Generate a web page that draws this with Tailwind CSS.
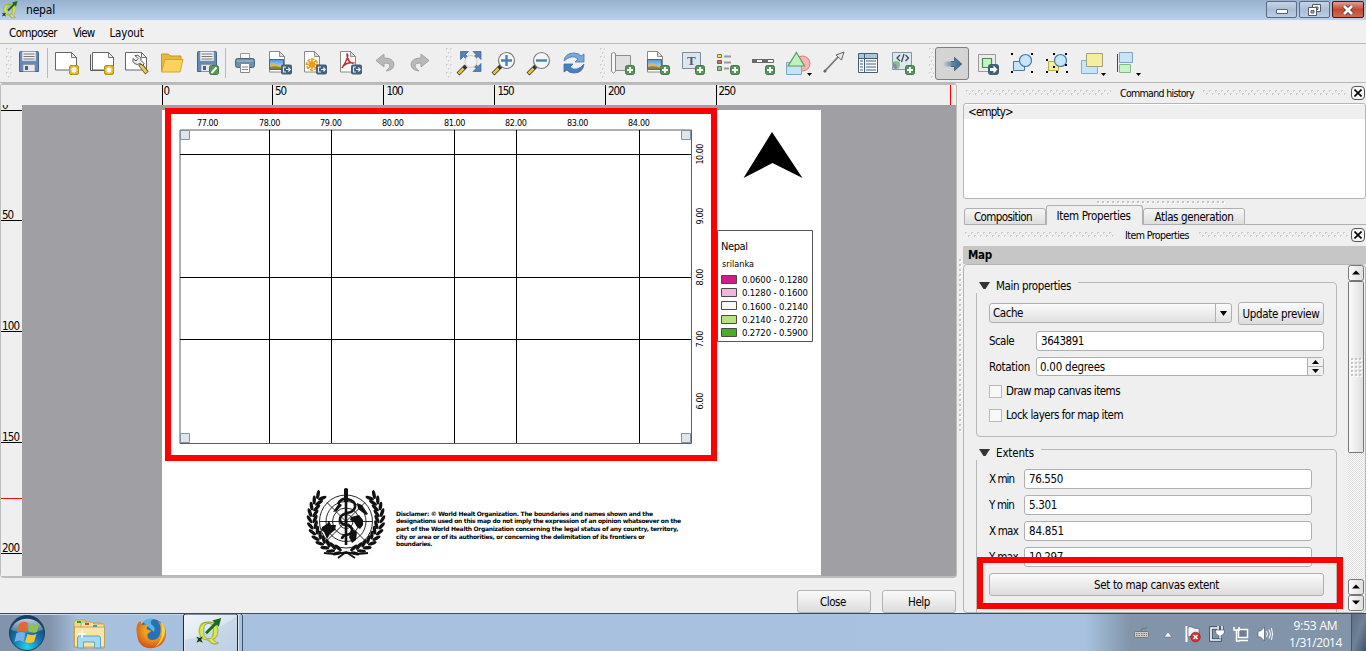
<!DOCTYPE html>
<html lang="en">
<head>
<meta charset="utf-8">
<title>nepal</title>
<script src="https://cdn.jsdelivr.net/npm/@tailwindcss/browser@4"></script>
</head>
<body class="w-[1366px] h-[651px] overflow-hidden bg-[#efefef] text-black text-[11.5px] leading-[14px] font-['DejaVu_Sans_Condensed','Noto_Sans',sans-serif] whitespace-nowrap">
<svg class="absolute w-0 h-0">
  <defs>
    <pattern id="gv" width="4" height="8" patternUnits="userSpaceOnUse"><path d="M0 0h2v2h-2zM2 4h2v2h-2z" fill="#d2d2d2"/><path d="M1 1h1v1h-1zM3 5h1v1h-1z" fill="#fff"/></pattern>
    <pattern id="gh" width="6" height="6" patternUnits="userSpaceOnUse"><path d="M0 0h2v2h-2zM3 3h2v2h-2z" fill="#cecece"/><path d="M1 1h1v1h-1zM4 4h1v1h-1z" fill="#fff"/></pattern>
    <pattern id="gd" width="5" height="5" patternUnits="userSpaceOnUse"><path d="M1 1h2v2h-2z" fill="#fff"/><path d="M0 0h2v2h-2z" fill="#c4c4c4"/></pattern>
    <pattern id="g4" width="4" height="4" patternUnits="userSpaceOnUse"><path d="M1 1h2v2h-2z" fill="#fff"/><path d="M0 0h2v2h-2z" fill="#c4c4c4"/></pattern>
    <pattern id="chk" width="2" height="2" patternUnits="userSpaceOnUse"><rect width="2" height="2" fill="#fafafa"/><path d="M0 0h1v1h-1zM1 1h1v1h-1z" fill="#dedede"/></pattern>
    <linearGradient id="thumb"><stop stop-color="#fcfcfc"/><stop offset="1" stop-color="#dedede"/></linearGradient>
    <linearGradient id="sky" x2="0" y2="1"><stop stop-color="#4b9be0"/><stop offset="1" stop-color="#cbe6f8"/></linearGradient>
    <linearGradient id="arr"><stop stop-color="#5d86a6" stop-opacity="0"/><stop offset=".5" stop-color="#5d86a6"/><stop offset="1" stop-color="#44647e"/></linearGradient>
    <g id="disk"><path d="M.5 1.500a1 1 0 0 1 1-1h17a1 1 0 0 1 1 1v19h-19z" fill="#6189b9" stroke="#44648c"/><path d="M3 .5h14v9.500h-14z" fill="#f2f2f2" stroke="#8c98a8" stroke-width=".6"/><path d="M4.500 3h11M4.500 5.500h11M4.500 8h11" stroke="#777"/><path d="M4 13.500h12v7h-12z" fill="#e8e8e8" stroke="#7b8796" stroke-width=".6"/><path d="M6 15h3v4h-3z" fill="#3d638e"/></g>
    <g id="plus"><rect x=".5" y=".5" width="9" height="9" rx="2" fill="#5a935c" stroke="#3f7a43"/><path d="M5 2v6M2 5h6" stroke="#fff" stroke-width="2"/></g>
    <g id="exp"><rect width="11" height="10" rx="2" fill="#43617c"/><path d="M5 2.500h-2.500v5h2.500M5 5h4M7.300 3l2 2-2 2" fill="none" stroke="#e8eef3" stroke-width="1.100"/></g>
    <g id="star"><rect x=".5" y=".5" width="9" height="9" rx="1.500" fill="#d9b321" stroke="#b8940f"/><path d="M5 1.500v7M1.500 5h7M2.600 2.600l4.800 4.800M7.400 2.600l-4.800 4.800" stroke="#fff" stroke-width="1.200"/></g>
    <g id="doc"><path d="M.5 .5h10l5 5v15.500h-15z" fill="#fff" stroke="#8a8a8a"/><path d="M10.500 .5v5h5z" fill="#ddd" stroke="#777" stroke-width=".8"/></g>
    <g id="pic"><path d="M.5 .5h14v10h-14z" fill="url(#sky)" stroke="#56646e"/><path d="M1 6q3-3 6-1t7 2v3h-13z" fill="#dcb85a"/><path d="M1 8q5-2 13 1v1h-13z" fill="#8d7c48"/></g>
    <g id="wide"><path d="M.5 .5h16l5 5v12.500h-21z" fill="#fff" stroke="#666"/><path d="M16.500 .5v5h5z" fill="#eee" stroke="#555" stroke-width=".8"/></g>
    <g id="hnd"><path d="M1 13l8-8" stroke="#333" stroke-width="4"/><path d="M1.500 12.500l5-5" stroke="#eac23e" stroke-width="2.600"/></g>
    <path id="dn" d="M0 0h5l-2.500 3z"/>
    <g id="q"><text x="0" y="14" font-family="Liberation Serif" font-weight="bold" font-size="17" fill="#dbe84e" stroke="#93a52e" stroke-width=".5">Q</text><path d="M5 9.500l7-7" stroke="#176b1a" stroke-width="1.800"/><path d="M9 1.500l5.500-1.500-1.500 5.500z" fill="#176b1a"/><path d="M-1 11.500l2 1 2-1-1 2 1 2-2-1-2 1 1-2z" fill="#123f14"/></g>
  </defs>
</svg>

<div class="flex flex-col w-[1366px] h-[651px]">
  <!-- title bar -->
  <header class="h-[21px] shrink-0 flex items-start bg-linear-to-b from-[#97b1cf] to-[#b8d0ea] border-b border-[#e6eef7]">
    <svg class="w-5 h-[20px]" viewBox="0 0 20 20"><use href="#q" transform="translate(3,1)"/></svg>
    <span class="ml-1.5 mt-[3px] text-[12px]" data-w="29">nepal</span>
    <div class="ml-auto mr-[2px] flex gap-[2px] pt-px">
      <div class="w-[31px] h-[17px] rounded-[2px] border border-[#5b6c80] bg-linear-to-b from-[#c6d5e6] via-[#a9bed6] to-[#b9cee5] flex items-center justify-center"><span class="w-3 h-[5px] mt-1 rounded-[1px] bg-white border border-[#5a6470]"></span></div>
      <div class="w-[31px] h-[17px] rounded-[2px] border border-[#5b6c80] bg-linear-to-b from-[#c6d5e6] via-[#a9bed6] to-[#b9cee5] flex items-center justify-center"><svg class="w-[13px] h-3" viewBox="0 0 13 12"><g fill="#fff" stroke="#535d68"><path d="M4.500 .5h8v7h-8z"/><path d="M7 3h3v2.500h-3z" fill="#9fb6cf"/><path d="M.5 3.500h8v8h-8z"/><path d="M3 6.500h3v2.500h-3z" fill="#9fb6cf"/></g></svg></div>
      <div class="w-[32px] h-[17px] rounded-[2px] border border-[#4c1512] bg-linear-to-b from-[#e39d8c] via-[#c04a33] to-[#cf6b50] flex items-center justify-center"><svg class="w-3 h-[10px]" viewBox="0 0 12 10"><path d="M2 1l8 8M10 1l-8 8" stroke="#5a4448" stroke-width="4.500"/><path d="M2 1l8 8M10 1l-8 8" stroke="#fff" stroke-width="2.600"/></svg></div>
    </div>
  </header>
  <!-- menu bar -->
  <nav class="h-[23px] shrink-0 flex items-center pl-[9px] pt-0.5 gap-4 border-b border-[#b9b9b9] bg-[#f0f0f0]">
    <span data-w="48">Composer</span><span data-w="21.5">View</span><span class="-ml-px" data-w="34">Layout</span>
  </nav>
  <!-- tool bars -->
  <div class="h-[39px] shrink-0 flex border-b border-[#b5b5b5]">
    <svg class="w-[50px] h-[38px]" viewBox="0 44 50 38"><rect x="0" y="0" width="6" height="30" fill="url(#gv)" transform="translate(6,48)"/><use href="#disk" x="19" y="51"/><path d="M47.500 48v30" stroke="#b8b8b8"/></svg>
    <svg class="w-[35px] h-[38px]" viewBox="50 44 35 38"><use href="#wide" x="55" y="52"/><use href="#star" x="69" y="65"/></svg>
    <svg class="w-[35px] h-[38px]" viewBox="85 44 35 38"><path d="M90.500 54.500v16h19" fill="none" stroke="#555"/><use href="#wide" x="92" y="52"/><use href="#star" x="104" y="65"/></svg>
    <svg class="w-[35px] h-[38px]" viewBox="120 44 35 38"><use href="#wide" x="125" y="52"/><path d="M140 64l7 9" stroke="#7b6329" stroke-width="4.500"/><path d="M140.500 65l6 7.500" stroke="#ecca64" stroke-width="2.800"/><path d="M133 58.500a4.500 4.500 0 0 0 7 5l3 2 1-2-3-3a4.500 4.500 0 0 0-6-5l3 3-2 2.500z" fill="#ececec" stroke="#444" stroke-width=".9"/></svg>
    <svg class="w-[35px] h-[38px]" viewBox="155 44 35 38"><path d="M161.500 71v-17h7l1.500 2h11v4" fill="#e8b93d" stroke="#c19528"/><path d="M161.500 72l3.500-12.500h18l-3 12.500z" fill="#fbd35c" stroke="#d2a533"/></svg>
    <svg class="w-[38px] h-[38px]" viewBox="190 44 38 38"><use href="#disk" x="197" y="51"/><use href="#plus" x="209" y="65"/><path d="M210.500 66.500h7v7h-7z" fill="#5a935c"/><path d="M211.500 73l5-5.500" stroke="#fff" stroke-width="2"/><path d="M225.500 48v30" stroke="#b8b8b8"/></svg>
    <svg class="w-[35px] h-[38px]" viewBox="228 44 35 38"><path d="M240.500 53.500h9v6h-9z" fill="#fff" stroke="#999"/><rect x="235.500" y="58.500" width="19" height="9" rx="2" fill="#6e90a9" stroke="#49677e"/><path d="M237 61h16" stroke="#a9c2d3"/><path d="M240.500 63.500h9v9h-9z" fill="#fff" stroke="#888"/><path d="M242 67h6M242 69.500h6" stroke="#888"/></svg>
    <svg class="w-[35px] h-[38px]" viewBox="263 44 35 38"><use href="#doc" x="269" y="51"/><use href="#pic" x="269" y="59"/><use href="#exp" x="281" y="64.500"/></svg>
    <svg class="w-[35px] h-[38px]" viewBox="298 44 35 38"><use href="#doc" x="304" y="51"/><g fill="none" stroke="#ef9a22" stroke-width="1.600"><path d="M312 58v13M305.500 64.500h13M307.500 60l9 9M316.500 60l-9 9"/><circle cx="312" cy="64.500" r="2.500"/><circle cx="312" cy="64.500" r="5.500" stroke-dasharray="2 2.320"/></g><use href="#exp" x="316" y="64.500"/></svg>
    <svg class="w-[35px] h-[38px]" viewBox="333 44 35 38"><use href="#doc" x="340" y="51"/><path d="M347 54c2 0 0 7-5 14 1-3 6-6 11-5-3 1-6-4-6-9z" fill="none" stroke="#c8252b" stroke-width="1.500"/><use href="#exp" x="351" y="64.500"/></svg>
    <svg class="w-[35px] h-[38px]" viewBox="368 44 35 38"><path d="M376 60.500l8-6.500v4q9 0 10 6 0 6-8 7 4-3 4-5 0-3-6-3v4z" fill="#b9b9b9" stroke="#a2a2a2"/></svg>
    <svg class="w-[35px] h-[38px]" viewBox="403 44 35 38"><path d="M429 60.500l-8-6.500v4q-9 0-10 6 0 6 8 7-4-3-4-5 0-3 6-3v4z" fill="#b9b9b9" stroke="#a2a2a2"/></svg>
    <svg class="w-[14px] h-[38px]" viewBox="438 44 14 38"><rect width="6" height="30" fill="url(#gv)" transform="translate(446,48)"/></svg>
    <svg class="w-[35px] h-[38px]" viewBox="452 44 35 38"><path d="M460.500 51.500h8l-3 3 4 4-2 2-4-4-3 3zM481 51.500h-8l3 3-4 4 2 2 4-4 3 3zM481 71.500h-8l3-3-4-4 2-2 4 4 3-3z" fill="#5780b4" stroke="#3c6294" stroke-width=".7"/><circle cx="471" cy="61.500" r="6" fill="#f2f2f2" stroke="#ccc"/><use href="#hnd" x="457" y="61"/></svg>
    <svg class="w-[35px] h-[38px]" viewBox="487 44 35 38"><use href="#hnd" x="492" y="61"/><circle cx="506.500" cy="60.500" r="8" fill="#f3f5f7" stroke="#7d7d7d" stroke-width="1.200"/><path d="M506.500 55v11M501 60.500h11" stroke="#4f7fb7" stroke-width="2.400"/></svg>
    <svg class="w-[35px] h-[38px]" viewBox="522 44 35 38"><use href="#hnd" x="527" y="61"/><circle cx="541.500" cy="60.500" r="8" fill="#f3f5f7" stroke="#7d7d7d" stroke-width="1.200"/><path d="M536 60.500h11" stroke="#4f7fb7" stroke-width="2.400"/></svg>
    <svg class="w-[35px] h-[38px]" viewBox="557 44 35 38"><path d="M564 61q1-8 10-8 5 0 7 3l3-2v8h-9l3-3q-3-3-7-2-4 1-7 4z" fill="#7ba7d9" stroke="#4778b2" stroke-width=".8"/><path d="M584 64q-1 9-10 9-5 0-7-3l-3 2v-8h9l-3 3q3 3 7 2 4-1 7-5z" fill="#4a7dbd" stroke="#3c6ca8" stroke-width=".8"/></svg>
    <svg class="w-[13px] h-[38px]" viewBox="592 44 13 38"><rect width="6" height="30" fill="url(#gv)" transform="translate(600,48)"/></svg>
    <svg class="w-[35px] h-[38px]" viewBox="605 44 35 38"><path d="M614.500 55.500h16v15h-16z" fill="#e0e0e0" stroke="#8c8c8c"/><path d="M611.500 53.500q2-2 4 0v18q-2 3-4 0z" fill="#f6f6f6" stroke="#8a8a8a"/><use href="#plus" x="625" y="65"/></svg>
    <svg class="w-[35px] h-[38px]" viewBox="640 44 35 38"><use href="#doc" x="647" y="51"/><use href="#pic" x="647" y="59"/><use href="#plus" x="660" y="65"/></svg>
    <svg class="w-[35px] h-[38px]" viewBox="675 44 35 38"><path d="M682.500 52.500h18v16h-18z" fill="#dde6ef" stroke="#7e8d9b"/><text x="687" y="65" font-family="Liberation Serif" font-size="13" font-weight="bold" fill="#4e6071">T</text><use href="#plus" x="695" y="65"/></svg>
    <svg class="w-[35px] h-[38px]" viewBox="710 44 35 38"><path d="M717.500 54.500h4v3h-4z" fill="#efe34b" stroke="#7a7a50"/><path d="M717.500 60.500h4v3h-4z" fill="#e36a6a" stroke="#815050"/><path d="M717.500 66.500h4v4h-4z" fill="#8cc48c" stroke="#507a50"/><path d="M724 56.500h7M724 62.500h7M724 68.500h5" stroke="#9a9a9a" stroke-width="2"/><use href="#plus" x="730" y="65"/></svg>
    <svg class="w-[35px] h-[38px]" viewBox="745 44 35 38"><path d="M752.500 59.500h21v3h-21z" fill="#fff" stroke="#666"/><path d="M752 59h5v4h-5zM762 59h6v4h-6z" fill="#6a6a6a"/><use href="#plus" x="765" y="65"/></svg>
    <svg class="w-[35px] h-[38px]" viewBox="780 44 35 38"><circle cx="802.500" cy="63.500" r="7.500" fill="#f7b6b6" stroke="#df7676"/><path d="M786.500 62.500h15v12h-15z" fill="#c6e2f7" stroke="#7aa6c8"/><path d="M796.500 52.500l8 13.500h-16.500z" fill="#bff0bf" stroke="#5f9c60" stroke-width="1.200"/><use href="#dn" x="807" y="73"/></svg>
    <svg class="w-[35px] h-[38px]" viewBox="815 44 35 38"><path d="M824 72l15-16" stroke="#777" stroke-width="1.800"/><path d="M844 52l-2.500 8-5.500-5z" fill="#e6e6e6" stroke="#666"/><circle cx="825" cy="71" r="1.500" fill="#666"/></svg>
    <svg class="w-[35px] h-[38px]" viewBox="850 44 35 38"><path d="M858.500 53.500h19v19h-19z" fill="#fff" stroke="#3f6076"/><path d="M859 54h18v4h-18z" fill="#a9c8dd"/><path d="M858.500 58.500h19M864.500 54v18" stroke="#3f6076"/><path d="M860 61h3M860 64h3M860 67h3M860 70h3M866 61h10M866 64h10M866 67h10M866 70h10" stroke="#3f6076" stroke-width="1.200"/></svg>
    <svg class="w-[35px] h-[38px]" viewBox="885 44 35 38"><path d="M892.500 52.500h19v17h-19z" fill="#dde7ef" stroke="#8494a1"/><path d="M900 55l-3 3 3 3M905.500 55l3 3-3 3M904 54l-2.500 8" fill="none" stroke="#39424a" stroke-width="1.200"/><circle cx="896" cy="65" r="4" fill="#85c485"/><path d="M893 63l3 1 1 4-2 1-2-3z" fill="#8f7fc8"/><use href="#plus" x="905" y="65"/></svg>
    <svg class="w-[15px] h-[38px]" viewBox="920 44 15 38"><rect width="5" height="30" fill="url(#gv)" transform="translate(929,48)"/></svg>
    <div class="w-[34px] h-[33px] mt-[3px] mr-px rounded-[3px] border border-[#7d7d7d] bg-[#d4d4d4] flex items-center justify-center pl-0.5"><svg class="w-5 h-4" viewBox="0 0 20 16"><path d="M0 5.500h11.500v-4.500l7.500 7-7.500 7v-4.500h-11.500z" fill="url(#arr)"/><path d="M8 5.500h3.500v-4l7 6.500-7 6.500v-4h-3.500" fill="none" stroke="#47677f"/></svg></div>
    <svg class="w-[35px] h-[38px]" viewBox="970 44 35 38"><path d="M978.500 54.500h17v17h-17z" fill="#ececec" stroke="#999"/><path d="M982.500 58.500h9v9h-9z" fill="#bff5bf" stroke="#4e8a50" stroke-width="1.200"/><rect x="988" y="64" width="11" height="11" rx="3" fill="#3e5f76"/><path d="M990 68h3.500v-2.500l4 4-4 4v-2.500h-3.500z" fill="#fff"/></svg>
    <svg class="w-[35px] h-[38px]" viewBox="1005 44 35 38"><path d="M1013.500 61.500h11v9h-11z" fill="#c6e5fb" stroke="#4a7898"/><circle cx="1025.500" cy="60.500" r="6" fill="#c6e5fb" stroke="#4a7898" stroke-width="1.200"/><path d="M1011 53h2v2h-2zM1031 53h2v2h-2zM1011 71h2v2h-2zM1031 71h2v2h-2z"/></svg>
    <svg class="w-[35px] h-[38px]" viewBox="1040 44 35 38"><path d="M1048.500 61.500h10v9h-10z" fill="#f5ef95" stroke="#b9ae3f"/><circle cx="1060.500" cy="60.500" r="6" fill="#c6e5fb" stroke="#4a7898" stroke-width="1.200"/><path d="M1053 53h2v2h-2zM1065 53h2v2h-2zM1046 59h2v2h-2zM1046 71h2v2h-2zM1053 66h2v2h-2zM1056 71h2v2h-2zM1066 71h2v2h-2zM1065 64h2v2h-2z"/></svg>
    <svg class="w-[35px] h-[38px]" viewBox="1075 44 35 38"><path d="M1081.500 60.500h16v13h-16z" fill="#c6e5fb" stroke="#86a9c6"/><path d="M1086.500 53.500h16v13h-16z" fill="#f3ef9c" stroke="#a5a07c"/><use href="#dn" x="1101" y="73"/></svg>
    <svg class="w-[35px] h-[38px]" viewBox="1110 44 35 38"><path d="M1117.500 54v18" stroke="#444"/><path d="M1119.500 52.500h13v10h-13z" fill="#c6e5fb" stroke="#7fa3c0"/><path d="M1119.500 64.500h11v8h-11z" fill="#c4f7c4" stroke="#86b986"/><use href="#dn" x="1136" y="73"/></svg>
  </div>

  <main class="flex-1 min-h-0 flex">
    <!-- composition view -->
    <section class="w-[958px] shrink-0 flex flex-col">
      <div class="w-[957px] h-[495px] rounded-sm border-2 border-[#bcbcbc] border-l-[1px]">
        <svg class="w-[955px] h-[491px]" viewBox="1 85 955 491" font-family="DejaVu Sans Condensed">
          <rect x="0" y="84" width="956" height="22" fill="#efefef"/>
          <rect x="0" y="105" width="22" height="472" fill="#efefef"/>
          <rect x="22" y="105" width="935" height="472" fill="#a09fa4"/>
          <path d="M162.500 85v20M272.500 85v20M383.500 85v20M494.500 85v20M605.500 85v20M716.500 85v20M1 110.500h21M1 220.500h21M1 331.500h21M1 442.500h21M1 553.500h21" stroke="#000"/>
          <path d="M950.500 85v20M1 498.500h21" stroke="#f00"/>
          <g font-size="11.500">
            <text x="163.500" y="95" textLength="6">0</text><text x="275" y="95" textLength="12">50</text><text x="386.500" y="95" textLength="17">100</text><text x="497.500" y="95" textLength="17">150</text><text x="608" y="95" textLength="17.500">200</text><text x="718.500" y="95" textLength="17.500">250</text>
            <text x="2" y="109">0</text><text x="2" y="219" textLength="12">50</text><text x="2" y="330" textLength="18">100</text><text x="2" y="441" textLength="18">150</text><text x="2" y="552" textLength="18">200</text>
          </g>
          <rect x="1" y="95" width="10" height="10" fill="#efefef"/>
          <rect x="162" y="110" width="659" height="466" fill="#fff"/>
          <path d="M162 575.500h659" stroke="#b8b8ba"/>
          <!-- map frame and grid -->
          <path d="M180 130h511.500v313.500h-511.500z" fill="none" stroke="#5f5f5f" stroke-width="1"/>
          <path d="M269.500 130v313M331.500 130v313M454.500 130v313M516.500 130v313M639.500 130v313M180 154.500h511M180 277.500h511M180 339.500h511" stroke="#000"/>
          <g fill="#e3e3ea" stroke="#7e97a5"><path d="M180.500 130.500h9v9h-9zM681.500 130.500h9v9h-9zM180.500 433.500h9v9h-9zM681.500 433.500h9v9h-9z"/></g>
          <g font-size="9">
            <text x="197" y="126" textLength="21.500">77.00</text><text x="259" y="126" textLength="21.500">78.00</text><text x="320" y="126" textLength="22">79.00</text><text x="382" y="126" textLength="22">80.00</text><text x="444" y="126" textLength="21.500">81.00</text><text x="505" y="126" textLength="22">82.00</text><text x="567" y="126" textLength="21.500">83.00</text><text x="628" y="126" textLength="22">84.00</text>
            <text transform="translate(702.500,164.500) rotate(-90)" textLength="21">10.00</text><text transform="translate(702.500,224.500) rotate(-90)" textLength="17">9.00</text><text transform="translate(702.500,285.500) rotate(-90)" textLength="17">8.00</text><text transform="translate(702.500,347.500) rotate(-90)" textLength="17">7.00</text><text transform="translate(702.500,409.500) rotate(-90)" textLength="17">6.00</text>
          </g>
          <path d="M772 132l30.500 46-30-15-29 15z"/>
          <!-- legend -->
          <path d="M717.500 230.500h95v111h-95z" fill="#fff" stroke="#555"/>
          <text x="721" y="250" font-size="11" textLength="27">Nepal</text>
          <text x="722" y="267" font-size="9" textLength="32">srilanka</text>
          <g stroke="#4a4a4a"><path d="M721.500 275.500h15v8h-15z" fill="#d01c8b"/><path d="M721.500 288.500h15v8h-15z" fill="#f1b6da"/><path d="M721.500 301.500h15v8h-15z" fill="#f7f7f7"/><path d="M721.500 315.500h15v8h-15z" fill="#b8e186"/><path d="M721.500 328.500h15v8h-15z" fill="#4dac26"/></g>
          <g font-size="9.500"><text x="742" y="283" textLength="66">0.0600 - 0.1280</text><text x="742" y="296" textLength="66">0.1280 - 0.1600</text><text x="742" y="310" textLength="66">0.1600 - 0.2140</text><text x="742" y="323" textLength="66">0.2140 - 0.2720</text><text x="742" y="336" textLength="66">0.2720 - 0.5900</text></g>
          <!-- emblem -->
          <g fill="none" stroke="#111" stroke-width=".9">
            <circle cx="346" cy="521.500" r="26.500"/><circle cx="346" cy="521.500" r="20"/><circle cx="346" cy="521.500" r="13.500"/><circle cx="346" cy="521.500" r="7"/>
            <path d="M319.500 521.500h53M327 502.500l38 38M365 502.500l-38 38"/>
            <path d="M346 489v56" stroke-width="2.600"/>
            <path d="M338 504q3-6 9-5 9 2 8 8-1 5-8 6-7 2-7 6 0 5 6 6t6 5-6 5q-4 1-4 4" stroke-width="2.600"/>
            <path d="M324 553q12 2 22-1 10 3 22 1M338 558l8-6M355 558l-9-6" stroke-width="1.800"/>
          </g>
          <g fill="#111"><path d="M344 489q2-2 4 0v13h-4z"/><path d="M322 527l5-3 2-3 2 4 5 0-1 5-5 4-3 5-3-7-3-2zM351 517l8-2 4 5 0 5-3 4-3-2-3-5-4-2zM352 529l5 3-1 8-4 3-3-6zM357 503l5 2 6 9-2 1-8-6zM333 512l6-9 3 2-5 6z"/><g id="laurel"></g></g>
          <g font-size="6" font-weight="bold" font-family="DejaVu Sans"><text x="396" y="515.500" textLength="257">Disclamer: © World Healt Organization. The boundaries and names shown and the</text><text x="396" y="523" textLength="285">designations used on this map do not imply the expression of an opinion whatsoever on the</text><text x="396" y="530.500" textLength="282.500">part of the World Health Organization concerning the legal status of any country, territory,</text><text x="396" y="538.500" textLength="249">city or area or of its authorities, or concerning the delimitation of its frontiers or</text><text x="396" y="546" textLength="36.500">boundaries.</text></g>
          <rect x="168" y="111" width="546" height="347" fill="none" stroke="#f00" stroke-width="6"/>
        </svg>
      </div>
      <div class="flex justify-end gap-[11px] pt-3 pr-[2px]">
        <div class="w-[74px] h-[23px] rounded-[3px] border border-[#b3b3b3] bg-linear-to-b from-[#fafafa] to-[#dcdcdc] flex items-center justify-center pr-0.5"><span data-w="26">Close</span></div>
        <div class="w-[74px] h-[23px] rounded-[3px] border border-[#b3b3b3] bg-linear-to-b from-[#fafafa] to-[#dcdcdc] flex items-center justify-center"><span data-w="22">Help</span></div>
      </div>
    </section>

    <!-- dock panels -->
    <svg class="w-[5px] h-[529px] shrink-0" viewBox="958 83 5 529"><rect width="3" height="175" fill="url(#gd)" transform="translate(959,259)"/></svg>
    <aside class="w-[403px] flex flex-col">
      <div class="h-5 shrink-0 flex items-center text-[10.5px]">
        <svg class="w-[145px] h-[6px] ml-[3px] shrink-0"><rect width="145" height="6" fill="url(#gh)"/></svg>
        <span class="ml-[9px] shrink-0" data-w="74">Command history</span>
        <svg class="w-[144px] h-[6px] ml-[9px] shrink-0"><rect width="144" height="6" fill="url(#gh)"/></svg>
        <div class="ml-auto mr-px w-[14px] h-[14px] shrink-0 rounded-sm border border-[#555] bg-[#f6f6f6] flex items-center justify-center"><svg class="w-2 h-2" viewBox="0 0 8 8"><path d="M.5 .5l7 7M7.500 .5l-7 7" stroke="#000" stroke-width="1.600"/></svg></div>
      </div>
      <div class="h-[96px] shrink-0 rounded-[3px] border border-[#b5b5b5] bg-white"><div class="h-[14px] pl-1 mt-px bg-[#efefef] flex items-center"><span data-w="45">&lt;empty&gt;</span></div></div>
      <svg class="w-[128px] h-[3px] ml-[134px] mt-[2px] shrink-0"><rect width="128" height="3" fill="url(#gd)"/></svg>
      <div class="h-[21px] shrink-0 flex items-end">
        <div class="w-[82px] h-[17px] ml-px rounded-t-[3px] border border-[#b0b0b0] bg-linear-to-b from-[#f6f6f6] to-[#dedede] flex items-center justify-center pr-1 pt-px"><span data-w="58">Composition</span></div>
        <div class="w-[97px] h-[20px] rounded-t-[3px] border border-b-0 border-[#b0b0b0] flex items-center justify-center pr-0.5"><span data-w="74">Item Properties</span></div>
        <div class="w-[102px] h-[17px] rounded-t-[3px] border border-[#b0b0b0] bg-linear-to-b from-[#f6f6f6] to-[#dedede] flex items-center justify-center pt-px"><span data-w="79">Atlas generation</span></div>
        <div class="flex-1 h-px bg-[#b0b0b0]"></div>
      </div>
      <div class="h-[21px] shrink-0 flex items-center pb-0.5 text-[10.5px]">
        <svg class="w-[150px] h-[6px] ml-[2px] shrink-0"><rect width="150" height="6" fill="url(#gh)"/></svg>
        <span class="ml-[10px] shrink-0" data-w="64">Item Properties</span>
        <svg class="w-[149px] h-[6px] ml-[10px] shrink-0"><rect width="149" height="6" fill="url(#gh)"/></svg>
        <div class="ml-auto mr-px w-[14px] h-[14px] shrink-0 rounded-sm border border-[#555] bg-[#f6f6f6] flex items-center justify-center"><svg class="w-2 h-2" viewBox="0 0 8 8"><path d="M.5 .5l7 7M7.500 .5l-7 7" stroke="#000" stroke-width="1.600"/></svg></div>
      </div>
      <div class="h-[18px] shrink-0 bg-[#c6c6c6] flex items-center pl-[5px] font-bold"><span data-w="24">Map</span></div>
      <div class="flex-1 min-h-0 flex rounded-sm border border-[#b5b5b5] relative">
        <div class="flex-1 pl-3 pr-[11px] overflow-hidden">
          <!-- main properties -->
          <div class="h-[155px] mt-[17px] border border-[#b8b8b8] rounded-sm px-3">
            <div class="-ml-[13px] -mt-[5px] h-[15px] w-[102px] bg-[#efefef] flex items-center pl-[3px]"><svg class="w-[11px] h-[7px] shrink-0" viewBox="0 0 11 7"><path d="M0 0h11l-4.500 7h-2z" fill="#333"/></svg><span class="ml-[6px]" data-w="75">Main properties</span></div>
            <div class="flex mt-[9px] justify-between">
              <div class="w-[243px] h-5 mt-px rounded-[3px] border border-[#b0b0b0] bg-linear-to-b from-[#fbfbfb] to-[#e0e0e0] flex items-center pl-[3px]"><span data-w="30">Cache</span><div class="ml-auto w-[16px] h-full border-l border-[#b0b0b0] flex items-center justify-center"><svg class="w-[7px] h-[5px]" viewBox="0 0 7 5"><path d="M0 0h7l-3.500 5z"/></svg></div></div>
              <div class="w-[86px] h-[23px] rounded-[3px] border border-[#b0b0b0] bg-linear-to-b from-[#fbfbfb] to-[#dcdcdc] flex items-center justify-center"><span data-w="77">Update preview</span></div>
            </div>
            <div class="flex items-center justify-between mt-[6px] h-5"><span data-w="25">Scale</span><div class="w-[288px] h-5 rounded-[3px] border border-[#b0b0b0] bg-white flex items-center pl-1"><span data-w="43">3643891</span></div></div>
            <div class="flex items-center justify-between mt-[6px] h-[19px]"><span data-w="41">Rotation</span><div class="w-[288px] h-[19px] rounded-[3px] border border-[#b0b0b0] bg-white flex items-center pl-[3px]"><span data-w="65">0.00 degrees</span>
              <div class="ml-auto w-4 h-full border-l border-[#b0b0b0] bg-[#f0f0f0] flex flex-col"><div class="h-[9px] border-b border-[#b0b0b0] flex items-center justify-center"><svg class="w-[7px] h-1" viewBox="0 0 7 4"><path d="M0 4h7l-3.500-4z"/></svg></div><div class="h-2 flex items-center justify-center"><svg class="w-[7px] h-1" viewBox="0 0 7 4"><path d="M0 0h7l-3.500 4z"/></svg></div></div></div></div>
            <div class="flex items-center mt-[8px] h-[14px]"><span class="w-[13px] h-[13px] border border-[#b8b8b8] bg-[#f8f8f8]"></span><span class="ml-1" data-w="114">Draw map canvas items</span></div>
            <div class="flex items-center mt-[10px] h-[14px]"><span class="w-[13px] h-[13px] border border-[#b8b8b8] bg-[#f8f8f8]"></span><span class="ml-1" data-w="117">Lock layers for map item</span></div>
          </div>
          <!-- extents -->
          <div class="h-[180px] mt-3 border border-[#b8b8b8] rounded-sm px-3">
            <div class="-ml-[13px] -mt-[5px] h-[15px] w-[65px] bg-[#efefef] flex items-center pl-[3px]"><svg class="w-[11px] h-[7px] shrink-0" viewBox="0 0 11 7"><path d="M0 0h11l-4.500 7h-2z" fill="#333"/></svg><span class="ml-[6px]" data-w="38">Extents</span></div>
            <div class="mt-[9px] flex flex-col gap-[6px] pr-3">
              <div class="flex items-center justify-between h-5"><span data-w="25">X min</span><div class="w-[288px] h-5 rounded-[3px] border border-[#b0b0b0] bg-white flex items-center pl-1"><span data-w="34">76.550</span></div></div>
              <div class="flex items-center justify-between h-5"><span data-w="25">Y min</span><div class="w-[288px] h-5 rounded-[3px] border border-[#b0b0b0] bg-white flex items-center pl-1"><span data-w="28">5.301</span></div></div>
              <div class="flex items-center justify-between h-5"><span data-w="29">X max</span><div class="w-[288px] h-5 rounded-[3px] border border-[#b0b0b0] bg-white flex items-center pl-1"><span data-w="35">84.851</span></div></div>
              <div class="flex items-center justify-between h-5"><span data-w="29">Y max</span><div class="w-[288px] h-5 rounded-[3px] border border-[#b0b0b0] bg-white flex items-center pl-1"><span data-w="34">10.297</span></div></div>
            </div>
            <div class="h-[23px] mt-[6px] rounded-[3px] border border-[#b0b0b0] bg-linear-to-b from-[#fbfbfb] to-[#dcdcdc] flex items-center justify-center"><span data-w="125">Set to map canvas extent</span></div>
          </div>
        </div>
        <svg class="w-4 h-[347px] mr-px shrink-0" viewBox="1348 265 16 347"><rect x="1348" y="453" width="16" height="130" fill="url(#chk)"/><g fill="url(#thumb)" stroke="#777"><rect x="1348.500" y="265.500" width="15" height="15" rx="2"/><rect x="1348.500" y="281.500" width="15" height="171" rx="1"/><rect x="1348.500" y="579.500" width="15" height="15" rx="2"/><rect x="1348.500" y="595.500" width="15" height="15" rx="2"/></g><path d="M1352 274.500h8l-4-4zM1352 588.500h8l-4-4zM1352 600.500h8l-4 4z"/><rect width="11" height="19" fill="url(#g4)" transform="translate(1351,358)"/></svg>
        <div class="absolute left-[13px] top-[292px] w-[366px] h-[52px] border-6 border-[#f00]"></div>
      </div>
    </aside>
  </main>

  <!-- taskbar -->
  <footer class="h-[38px] shrink-0 flex border-t border-[#3c4c5e] bg-[linear-gradient(90deg,#8194ab_0,#8194ab_50px,#a6c0dd_78px,#a8c2df_1085px,#8194aa_1130px,#8194aa_1366px)]">
    <svg class="w-[245px] h-[37px]" viewBox="0 614 245 37">
      <defs><radialGradient id="orb" cx=".5" cy=".9" r=".8"><stop stop-color="#1fd5f5"/><stop offset=".5" stop-color="#1674ae"/><stop offset="1" stop-color="#183f67"/></radialGradient><linearGradient id="gl" x2="0" y2="1"><stop stop-color="#fff" stop-opacity=".75"/><stop offset="1" stop-color="#fff" stop-opacity=".15"/></linearGradient><radialGradient id="fx" cx=".55" cy=".35" r=".7"><stop offset=".4" stop-color="#f2a01f"/><stop offset="1" stop-color="#cf4613"/></radialGradient><linearGradient id="act" x1="0" y1="0" x2="1" y2="1"><stop stop-color="#f2f6fa"/><stop offset="1" stop-color="#c3d5e8"/></linearGradient></defs>
      <path d="M0 614.500h245" stroke="#c9d9ea"/>
      <circle cx="27" cy="633" r="17.500" fill="url(#orb)" stroke="#1b3d5c"/>
      <path d="M11 630a16.500 15 0 0 1 32 0q-16 6-32 0z" fill="url(#gl)"/>
      <path d="M19 624q4-4 9-1l-2 9q-4-2-9 0z" fill="#e8672c"/><path d="M29.500 624q5 2 9.500 0l-2 8q-4 2-9-1z" fill="#93c24b"/><path d="M16.500 633q5-2 9 0l-2 9q-4-3-9 0z" fill="#74b2e6"/><path d="M27.500 634q4 2 9 0l-2.500 8q-5 2-9 0z" fill="#f5c33b"/>
      <g stroke="#b89a45" stroke-width=".8"><path d="M74 622l2-2h9l2 3h14v24h-27z" fill="#f0d88c"/><path d="M81 623l2-1h9l2 2h10v24h-23z" fill="#f6e3a0"/><path d="M74.500 627h30v20h-30z" fill="#f7e6a8"/></g>
      <path d="M77 621h4v2h-4z" fill="#25a32f"/><path d="M85 623h4v2h-4z" fill="#cf4a2a"/><path d="M93 625h4v2h-4z" fill="#4d8ed6"/>
      <path d="M77.500 648v-10q0-2 2-2h19q2 0 2 2v10h-6v-6h-11v6z" fill="#a6d9f2" stroke="#5ba3cc"/><path d="M82 630v8M78 634h8" stroke="#fff" stroke-width="1.500"/>
      <circle cx="152" cy="632" r="13" fill="#2472b8"/><path d="M143 622q4-5 11-3-4 1-3 5 5 3 3 8z" fill="#5eb3e6"/>
      <path d="M136.500 630q0-7 4-9l1 4q4-1 7 0-2 2-2 4l5 2-4 3q-1 6 5 6 7 0 8-8 1-7-3-11 7 3 8.500 10 1 12-9 16-12 4-18-5-2-4-2.500-12z" fill="url(#fx)"/><path d="M161 622q6 6 3 14t-9 11q7-7 7-14t-1-11z" fill="#f8d14e"/>
      <rect x="183.500" y="614" width="54" height="40" rx="2" fill="url(#act)" stroke="#1f2c3a"/><path d="M240.500 614q2 0 2 2v36" fill="none" stroke="#40536a"/><path d="M238.500 615v37" stroke="#dbe7f3"/><path d="M185 640q26-5 52-24v36h-52z" fill="#b4c8de" opacity=".45"/>
      <use href="#q" transform="translate(198,618) scale(1.600)"/>
    </svg>
    <svg class="ml-auto w-[150px] h-[37px]" viewBox="1130 614 150 37">
      <rect x="1134.500" y="631.500" width="14" height="6" rx="1" fill="#ccc" stroke="#777"/><path d="M1136 633.500h11M1136 635.500h11" stroke="#777" stroke-dasharray="1.500 1"/><path d="M1141 631q0-3 3-2.500t3-2" fill="none" stroke="#777"/>
      <path d="M1164 637l4-5 4 5z" fill="#fff" stroke="#5a6b7d" stroke-width=".6"/>
      <path d="M1186.500 626v16" stroke="#fff" stroke-width="2"/><path d="M1188 627q3-1 6 1 3 1 5 0v9q-3 1-5 0-3-2-6 0z" fill="#eef1f5" stroke="#56677a" stroke-width=".7"/><circle cx="1195.500" cy="637" r="4.800" fill="#d8302b" stroke="#8f1a17" stroke-width=".6"/><path d="M1193.500 635l4 4M1197.500 635l-4 4" stroke="#fff" stroke-width="1.500"/>
      <g fill="none" stroke="#3f4e5f" stroke-width="3.400"><path d="M1217 628h-6v12h9v-2"/><path d="M1218 626v4M1222 626v4"/></g><g fill="none" stroke="#fff" stroke-width="1.600"><path d="M1217 628h-6v12h9v-2"/><path d="M1218 626v4M1222 626v4"/></g><path d="M1215.500 630h9q0 5-3.500 5.500v3.500h-2v-3.500q-3.500-.5-3.500-5.500z" fill="#fff" stroke="#3f4e5f" stroke-width=".6"/>
      <path d="M1238.500 629.500h9v8h-9z" fill="#6c7f94" stroke="#fff" stroke-width="1.500"/><path d="M1239 640.500h9M1236.500 633v8h3M1234 627v3h5v-3M1236.500 630v4" stroke="#fff" stroke-width="1.500" fill="none"/>
      <path d="M1258 631h2.500l4-4v14l-4-4h-2.500z" fill="#fff" stroke="#4a5a6c" stroke-width=".7"/><path d="M1266.500 631q2 3 0 6M1269 629.500q3 4.500 0 9M1271.500 628q2 6 0 12" fill="none" stroke="#fff"/>
    </svg>
    <div class="w-[71px] flex flex-col items-center pt-[3px] text-white text-[12px] leading-[17px] font-['Open_Sans','Noto_Sans',sans-serif]"><span data-w="44">9:53 AM</span><span data-w="53">1/31/2014</span></div>
    <div class="w-[15px] border-l border-[#46566a] bg-linear-to-br from-[#5b6e84] via-[#6f8298] to-[#43546a]"></div>
  </footer>
</div>

<script>
// Spread each label to its design width.
function fitLabels() {
  document.querySelectorAll('[data-w]').forEach(function (el) {
    el.style.letterSpacing = '0px';
    var range = document.createRange();
    range.selectNodeContents(el);
    var s = (+el.dataset.w - range.getBoundingClientRect().width) / el.textContent.length;
    el.style.letterSpacing = s + 'px';
  });
}
fitLabels();
window.addEventListener('load', function () { fitLabels(); requestAnimationFrame(fitLabels); });
document.fonts.ready.then(fitLabels);
// Laurel leaves on both sides of the emblem.
var leaves = '';
for (var i = 0; i < 12; i++) {
  var a = (-40 + i * 10.5) * Math.PI / 180;
  [[31, -28], [36.500, 28]].forEach(function (p) {
    [1, -1].forEach(function (side) {
      var x = 346 + side * Math.cos(a) * p[0], y = 518 + Math.sin(a) * p[0];
      var deg = (a * 180 / Math.PI + 90 + p[1]);
      leaves += '<ellipse rx="4.500" ry="1.700" transform="translate(' + x + ',' + y + ') rotate(' + (side * deg) + ')"/>';
    });
  });
}
document.getElementById('laurel').innerHTML = leaves;
</script>
</body>
</html>
